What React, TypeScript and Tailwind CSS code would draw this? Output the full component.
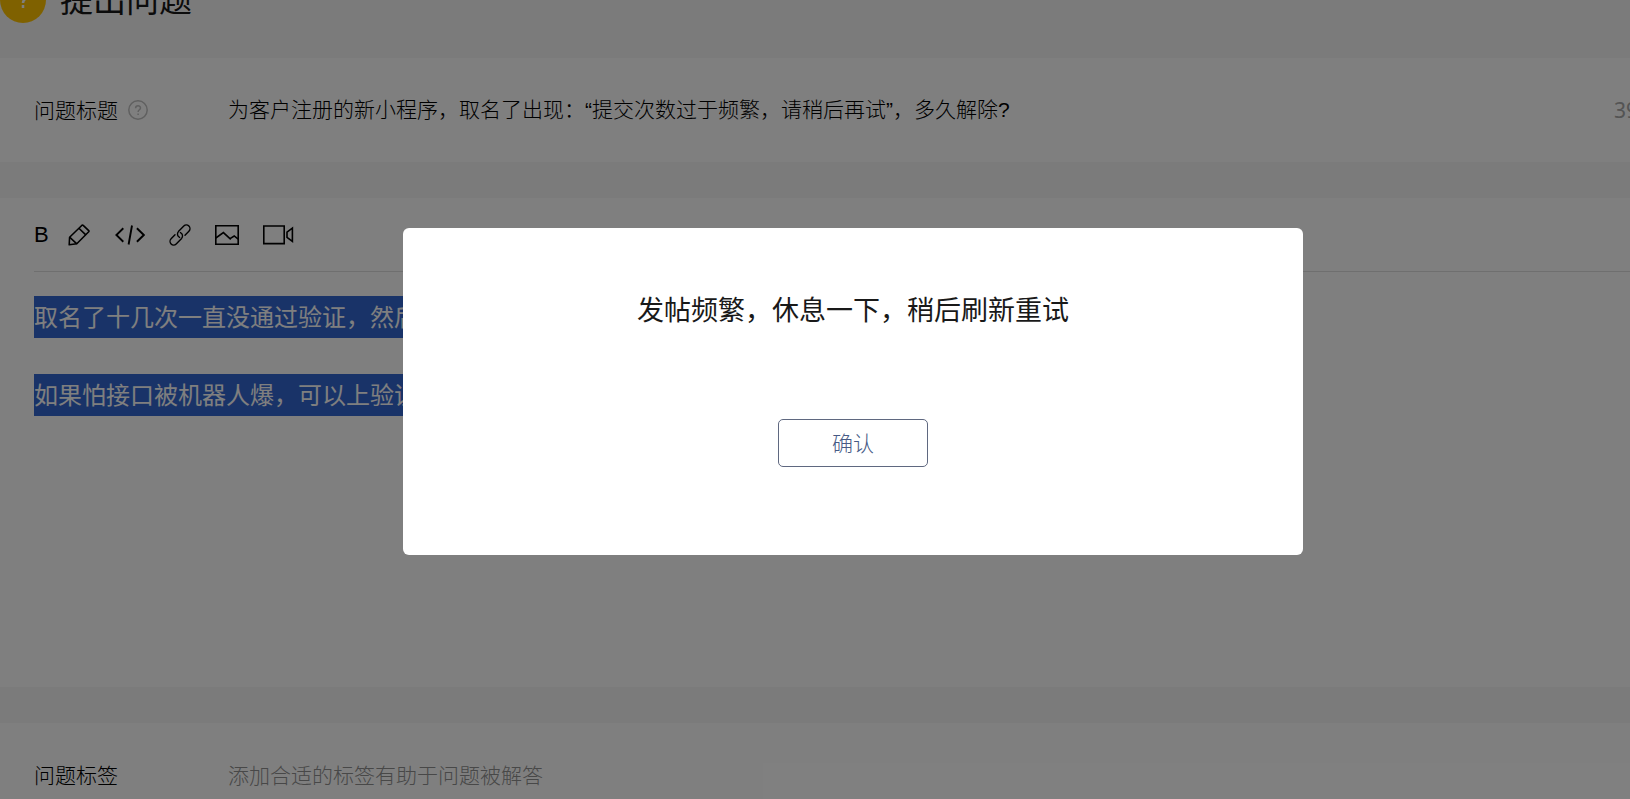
import { useState } from 'react';

function PencilIcon() {
  return (
    <svg width="22" height="22" viewBox="0 0 22 22" fill="none" stroke="currentColor" strokeWidth="1.6" strokeLinejoin="round">
      <path d="M1.2 20.8L1.6 13.2L14 1.2Q14.6 .8 15.2 1.3L20.7 6.6Q21.2 7.2 20.7 7.8L8.8 19.8Z" />
      <path d="M10.9 4.2L17.8 10.9M1.6 13.2L8.8 19.8" />
    </svg>
  );
}

function CodeIcon() {
  return (
    <svg width="30" height="22" viewBox="0 0 30 22" fill="none" stroke="currentColor" strokeWidth="1.9">
      <path d="M8.3 4.2L1.4 11L8.3 17.8M21.9 4.2L28.8 11L21.9 17.8M17 1.5L13.6 20.5" />
    </svg>
  );
}

function LinkIcon() {
  return (
    <svg width="22" height="22" viewBox="0 0 22 22" fill="none" stroke="currentColor" strokeWidth="1.4" strokeLinecap="round">
      <path d="M10.6 13.4A3.7 3.7 0 0 1 9.4 7.6L14.8 2.1A3.6 3.6 0 0 1 19.9 7.2L16 11.2" />
      <path d="M11.4 8.6A3.7 3.7 0 0 1 12.6 14.4L7.2 19.9A3.6 3.6 0 0 1 2.1 14.8L6 10.8" />
    </svg>
  );
}

function ImageIcon() {
  return (
    <svg width="24" height="20" viewBox="0 0 24 20" fill="none" stroke="currentColor" strokeWidth="1.6">
      <path d="M.8 .8H23.2V19.2H.8Z" />
      <path d="M.8 13L8.4 7.6L15.8 14.4M15 13.6L19.2 11L23.2 14.2" />
    </svg>
  );
}

function VideoIcon() {
  return (
    <svg width="31" height="20" viewBox="0 0 31 20" fill="none" stroke="currentColor" strokeWidth="1.6">
      <path d="M.8 1H21.2V18.6H.8ZM24 7.2L29.4 3.2V16.4L24 12.4Z" />
    </svg>
  );
}

function HelpIcon() {
  return (
    <svg width="20" height="20" viewBox="0 0 20 20" fill="none" stroke="currentColor" strokeWidth="1.5">
      <circle cx="10" cy="10" r="9.2" />
      <path d="M7.6 8.2C7.6 5 12.5 5 12.5 8C12.5 9.8 10.1 9.8 10.1 12M10.1 13.4V15" />
    </svg>
  );
}

export default function App() {
  const [title, setTitle] = useState('为客户注册的新小程序，取名了出现：“提交次数过于频繁，请稍后再试”，多久解除?');
  const [tags, setTags] = useState('');
  const [showDialog, setShowDialog] = useState(true);

  return (
    <div
      lang="zh-CN"
      className="h-screen overflow-hidden bg-[#f7f7f7] font-['Noto_Sans','Noto_Sans_CJK_SC',sans-serif] text-[21px] leading-8 font-light text-black"
    >
      <div className="relative flex min-h-full min-w-[1706px] flex-col">
        {/* Page heading, scrolled halfway out of view */}
        <header className="-mt-[58px] flex h-[116px] items-center gap-[14px]">
          <span className="flex h-[46px] w-[46px] items-center justify-center rounded-full bg-[#ffc300] text-white">
            <svg width="20" height="20" viewBox="0 0 20 20" fill="none" stroke="currentColor" strokeWidth="2.5">
              <path d="M5 5C5 -1 15 -1 15 5C15 9 10 8 10 13M10 15V18" />
            </svg>
          </span>
          <h1 className="text-[33px] leading-12 font-normal text-[#191919]">提出问题</h1>
        </header>

        <section className="flex h-[104px] items-center bg-white px-[34px]">
          <div className="flex w-[194px] items-center gap-[10px]">
            <label htmlFor="title">问题标题</label>
            <button type="button" aria-label="帮助" className="text-[#c0c0c0]">
              <HelpIcon />
            </button>
          </div>
          <input
            id="title"
            type="text"
            value={title}
            onChange={(e) => setTitle(e.target.value)}
            className="min-w-0 flex-1 font-['Liberation_Sans','Noto_Sans_CJK_SC',sans-serif] focus:outline-none"
          />
          <span className="w-[58px] font-normal text-[#a8a8a8]">{title.length}/64</span>
        </section>

        <section className="mt-9 h-[489px] bg-white px-[34px]">
          <div className="flex h-[74px] items-center border-b border-[#dedede]">
            <button
              type="button"
              aria-label="加粗"
              className="mr-[20px] w-[14px] font-['Liberation_Sans',sans-serif] text-[22px] font-normal"
            >
              B
            </button>
            <button type="button" aria-label="高亮" className="mr-[25px]">
              <PencilIcon />
            </button>
            <button type="button" aria-label="代码" className="mr-[24px]">
              <CodeIcon />
            </button>
            <button type="button" aria-label="链接" className="mr-[24px]">
              <LinkIcon />
            </button>
            <button type="button" aria-label="图片" className="mr-[24px]">
              <ImageIcon />
            </button>
            <button type="button" aria-label="视频">
              <VideoIcon />
            </button>
          </div>
          <div className="flex flex-col items-start gap-9 pt-[24px] text-2xl leading-[42px] font-normal text-white">
            <p className="bg-[#3367d1]">取名了十几次一直没通过验证，然后</p>
            <p className="bg-[#3367d1]">如果怕接口被机器人爆，可以上验证</p>
          </div>
        </section>

        <section className="mt-9 flex h-[104px] items-center bg-white px-[34px]">
          <label htmlFor="tags" className="w-[194px]">
            问题标签
          </label>
          <input
            id="tags"
            type="text"
            value={tags}
            onChange={(e) => setTags(e.target.value)}
            placeholder="添加合适的标签有助于问题被解答"
            className="min-w-0 flex-1 placeholder:text-[#909090] focus:outline-none"
          />
        </section>

        {showDialog && (
          <div className="absolute inset-0 flex items-start justify-center bg-black/50 pt-[228px]">
            <div role="dialog" aria-modal="true" className="flex w-[900px] flex-col items-center rounded-md bg-white pt-[62px] pb-[88px]">
              <p className="text-[27px] leading-10 font-normal text-[#191919]">发帖频繁，休息一下，稍后刷新重试</p>
              <button
                type="button"
                onClick={() => setShowDialog(false)}
                className="mt-[89px] h-12 w-[150px] rounded-[5px] border border-[#5f6880] text-[#465a85]"
              >
                确认
              </button>
            </div>
          </div>
        )}
      </div>
    </div>
  );
}
